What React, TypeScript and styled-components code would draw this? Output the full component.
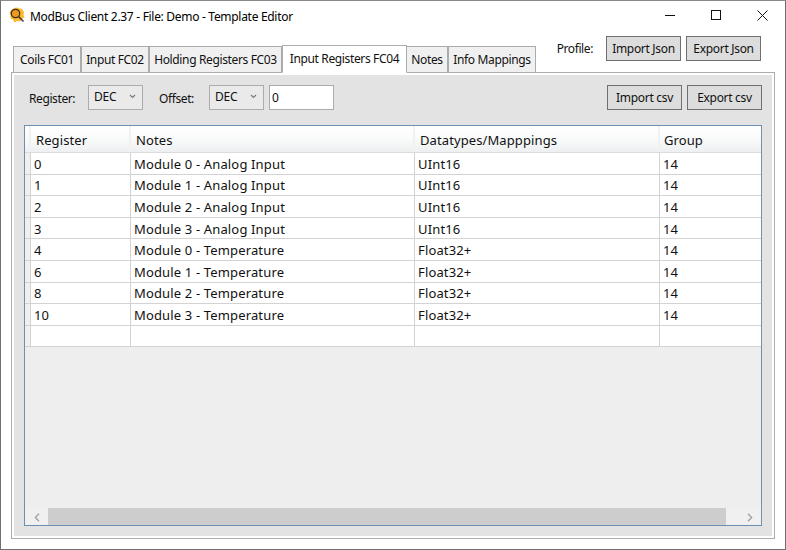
import React from 'react';
import styled, { createGlobalStyle } from 'styled-components';

const GlobalStyle = createGlobalStyle`
  html, body {
    margin: 0;
    padding: 0;
    background: #fff;
  }
  * {
    box-sizing: border-box;
  }
`;

const Window = styled.div`
  width: 786px;
  height: 550px;
  border: 1px solid #707070;
  border-top-color: #8a8a8a;
  background: #fff;
  display: flex;
  flex-direction: column;
  font-family: "Noto Sans", "Open Sans", sans-serif;
  font-size: 12px;
  color: #111;
  overflow: hidden;
`;

const TitleBar = styled.div`
  height: 29px;
  flex: none;
  display: flex;
  align-items: center;
  padding-left: 8px;
  padding-top: 1px;
`;

const IconSlot = styled.span`
  display: flex;
  margin-bottom: 2px;
`;

const TitleText = styled.span`
  margin-left: 5px;
  letter-spacing: -0.3px;
  color: #000;
`;

const WindowButtons = styled.div`
  margin-left: auto;
  display: flex;
  align-items: center;
  padding-right: 17px;
  padding-bottom: 2px;
  gap: 36px;
`;

const HeaderRow = styled.div`
  height: 42px;
  flex: none;
  display: flex;
  align-items: flex-end;
  padding: 0 24px 0 12px;
`;

const TabStrip = styled.div`
  display: flex;
  align-items: flex-end;
  position: relative;
  z-index: 1;
  margin-bottom: -1px;
`;

const Tab = styled.div<{ $width: number; $active?: boolean }>`
  width: ${(p) => p.$width}px;
  height: ${(p) => (p.$active ? 28 : 27)}px;
  display: flex;
  align-items: center;
  justify-content: center;
  white-space: nowrap;
  letter-spacing: -0.36px;
  padding-bottom: ${(p) => (p.$active ? 2 : 0)}px;
  background: ${(p) => (p.$active ? '#fff' : '#f0f0f0')};
  border: 1px solid #acacac;
  border-bottom-color: ${(p) => (p.$active ? '#fff' : '#acacac')};
  margin-right: ${(p) => (p.$active ? -1 : 0)}px;
  position: relative;
  z-index: ${(p) => (p.$active ? 2 : 1)};
`;

const ProfileGroup = styled.div`
  margin-left: auto;
  margin-bottom: 11px;
  display: flex;
  align-items: center;
`;

const ProfileLabel = styled.span`
  margin-right: 8px;
  padding-bottom: 1px;
  letter-spacing: -0.4px;
`;

const Button = styled.button`
  width: 75px;
  height: 25px;
  padding: 0 0 1px;
  margin-left: 5px;
  border: 1px solid #707070;
  border-radius: 0;
  background: #dddddd;
  color: #111;
  font: inherit;
  letter-spacing: -0.3px;
  white-space: nowrap;
`;

const Panel = styled.div`
  margin: 0 10px 10px 10px;
  height: 467px;
  flex: none;
  border: 1px solid #acacac;
  padding: 2px;
  background: #fff;
  display: flex;
`;

const PanelInner = styled.div`
  flex: 1;
  min-width: 0;
  background: #e3e3e3;
  padding: 10px 10px 10px 10px;
  display: flex;
  flex-direction: column;
`;

const Toolbar = styled.div`
  height: 25px;
  flex: none;
  display: flex;
  align-items: center;
  margin-bottom: 15px;
`;

const FieldLabel = styled.span<{ $width: number; $inset: number }>`
  width: ${(p) => p.$width}px;
  padding-left: ${(p) => p.$inset}px;
  padding-top: 2px;
  letter-spacing: -0.4px;
`;

const Combo = styled.div`
  width: 55px;
  height: 25px;
  border: 1px solid #acacac;
  background: #eaeaea;
  display: flex;
  align-items: center;
  justify-content: space-between;
  padding: 0 6px 2px 5px;
  letter-spacing: -0.2px;
`;

const NumberBox = styled.div`
  width: 65px;
  height: 25px;
  margin-left: 5px;
  border: 1px solid #acacac;
  background: #fff;
  display: flex;
  align-items: center;
  padding: 0 2px 1px;
`;

const ToolbarActions = styled.div`
  margin-left: auto;
  display: flex;
`;

const Table = styled.div`
  flex: 1;
  min-height: 0;
  border: 1px solid #6d8fb3;
  border-right-color: #7c8ea3;
  background: #eeeeee;
  display: flex;
  flex-direction: column;
`;

const columns = '6px 100px 284px 245px 1fr';

const HeaderCells = styled.div`
  height: 27px;
  flex: none;
  display: grid;
  grid-template-columns: ${columns};
  background: linear-gradient(to bottom, #ffffff 0%, #f9fafa 50%, #eeeff0 100%);
  font-size: 13px;
  letter-spacing: 0.1px;
  border-bottom: 1px solid #dcdcdc;
`;

const HeaderCell = styled.div`
  display: flex;
  align-items: center;
  padding: 1px 0 0 5px;
  border-right: 2px solid #f1f1f1;

  &:first-child {
    padding: 0;
  }
  &:last-child {
    border-right: 0;
    padding-left: 4px;
  }
`;

const Row = styled.div`
  height: 21.6px;
  flex: none;
  display: grid;
  grid-template-columns: ${columns};
  background: #fff;
  border-bottom: 1px solid #d3d3d3;
  font-size: 13px;
  letter-spacing: 0.15px;
`;

const Gutter = styled.div`
  background: #f0f0f0;
  border-right: 1px solid #d3d3d3;
`;

const Cell = styled.div`
  display: flex;
  align-items: center;
  padding: 1px 0 0 3px;
  border-right: 1px solid #d3d3d3;
  white-space: nowrap;

  &:last-child {
    border-right: 0;
  }
`;

const TableFill = styled.div`
  flex: 1;
`;

const ScrollBar = styled.div`
  height: 17px;
  flex: none;
  display: flex;
  align-items: center;
  background: #f0f0f0;
`;

const ScrollArrow = styled.div`
  width: 23px;
  height: 17px;
  flex: none;
  display: flex;
  align-items: center;
  justify-content: center;
  padding-top: 1px;
`;

const ScrollThumb = styled.div`
  flex: 1;
  height: 17px;
  background: #cdcdcd;
  margin-right: 12px;
`;

const AppIcon = () => (
  <svg width="16" height="16" viewBox="0 0 16 16">
    <path
      d="M5 1 L8 0.5 L10.5 1.5 L13 2 L15 5 L14.5 8 L15.5 10.5 L13 11.5 L11 14.5 L8 14 L5.5 15.5 L4 12.5 L1.5 11.5 L1.5 8 L0.3 5.5 L2.5 3 Z"
      fill="#fdb92e"
    />
    <circle cx="6.5" cy="6.5" r="4.2" fill="#ee9a1e" stroke="#3a3024" strokeWidth="1.3" />
    <path d="M9.6 9.6 L14.5 14.5" stroke="#4a3a2a" strokeWidth="1.6" />
  </svg>
);

const MinimizeIcon = () => (
  <svg width="10" height="10" viewBox="0 0 10 10">
    <path d="M0 5.5 H10" stroke="#111" strokeWidth="1" />
  </svg>
);

const MaximizeIcon = () => (
  <svg width="10" height="10" viewBox="0 0 10 10">
    <rect x="0.5" y="0.5" width="9" height="9" fill="none" stroke="#111" strokeWidth="1" />
  </svg>
);

const CloseIcon = () => (
  <svg width="11" height="11" viewBox="0 0 11 11">
    <path d="M0.5 0.5 L10.5 10.5 M10.5 0.5 L0.5 10.5" stroke="#111" strokeWidth="1" />
  </svg>
);

const ComboChevron = () => (
  <svg width="7" height="5" viewBox="0 0 7 5">
    <path d="M1 1 L3.5 3.5 L6 1" fill="none" stroke="#777" strokeWidth="1.1" />
  </svg>
);

const ScrollChevron = ({ right }: { right?: boolean }) => (
  <svg width="6" height="9" viewBox="0 0 6 9">
    <path
      d={right ? 'M1 0.8 L4.6 4.5 L1 8.2' : 'M5 0.8 L1.4 4.5 L5 8.2'}
      fill="none"
      stroke="#a3a3a3"
      strokeWidth="1.4"
    />
  </svg>
);

const tabs = [
  { label: 'Coils FC01', width: 68 },
  { label: 'Input FC02', width: 68 },
  { label: 'Holding Registers FC03', width: 133 },
  { label: 'Input Registers FC04', width: 125, active: true },
  { label: 'Notes', width: 42 },
  { label: 'Info Mappings', width: 88 },
];

const rows = [
  ['0', 'Module 0 - Analog Input', 'UInt16', '14'],
  ['1', 'Module 1 - Analog Input', 'UInt16', '14'],
  ['2', 'Module 2 - Analog Input', 'UInt16', '14'],
  ['3', 'Module 3 - Analog Input', 'UInt16', '14'],
  ['4', 'Module 0 - Temperature', 'Float32+', '14'],
  ['6', 'Module 1 - Temperature', 'Float32+', '14'],
  ['8', 'Module 2 - Temperature', 'Float32+', '14'],
  ['10', 'Module 3 - Temperature', 'Float32+', '14'],
  ['', '', '', ''],
];

const App = () => {
  return (
    <Window>
      <GlobalStyle />
      <TitleBar>
        <IconSlot>
          <AppIcon />
        </IconSlot>
        <TitleText>ModBus Client 2.37 - File: Demo - Template Editor</TitleText>
        <WindowButtons>
          <MinimizeIcon />
          <MaximizeIcon />
          <CloseIcon />
        </WindowButtons>
      </TitleBar>
      <HeaderRow>
        <TabStrip>
          {tabs.map((tab) => (
            <Tab key={tab.label} $width={tab.width} $active={tab.active}>
              {tab.label}
            </Tab>
          ))}
        </TabStrip>
        <ProfileGroup>
          <ProfileLabel>Profile:</ProfileLabel>
          <Button>Import Json</Button>
          <Button>Export Json</Button>
        </ProfileGroup>
      </HeaderRow>
      <Panel>
        <PanelInner>
          <Toolbar>
            <FieldLabel $width={64} $inset={5}>Register:</FieldLabel>
            <Combo>
              DEC
              <ComboChevron />
            </Combo>
            <FieldLabel $width={66} $inset={16}>Offset:</FieldLabel>
            <Combo>
              DEC
              <ComboChevron />
            </Combo>
            <NumberBox>0</NumberBox>
            <ToolbarActions>
              <Button>Import csv</Button>
              <Button>Export csv</Button>
            </ToolbarActions>
          </Toolbar>
          <Table>
            <HeaderCells>
              <HeaderCell />
              <HeaderCell>Register</HeaderCell>
              <HeaderCell>Notes</HeaderCell>
              <HeaderCell>Datatypes/Mapppings</HeaderCell>
              <HeaderCell>Group</HeaderCell>
            </HeaderCells>
            {rows.map((row, i) => (
              <Row key={i}>
                <Gutter />
                {row.map((value, j) => (
                  <Cell key={j}>{value}</Cell>
                ))}
              </Row>
            ))}
            <TableFill />
            <ScrollBar>
              <ScrollArrow>
                <ScrollChevron />
              </ScrollArrow>
              <ScrollThumb />
              <ScrollArrow>
                <ScrollChevron right />
              </ScrollArrow>
            </ScrollBar>
          </Table>
        </PanelInner>
      </Panel>
    </Window>
  );
};

export default App;
